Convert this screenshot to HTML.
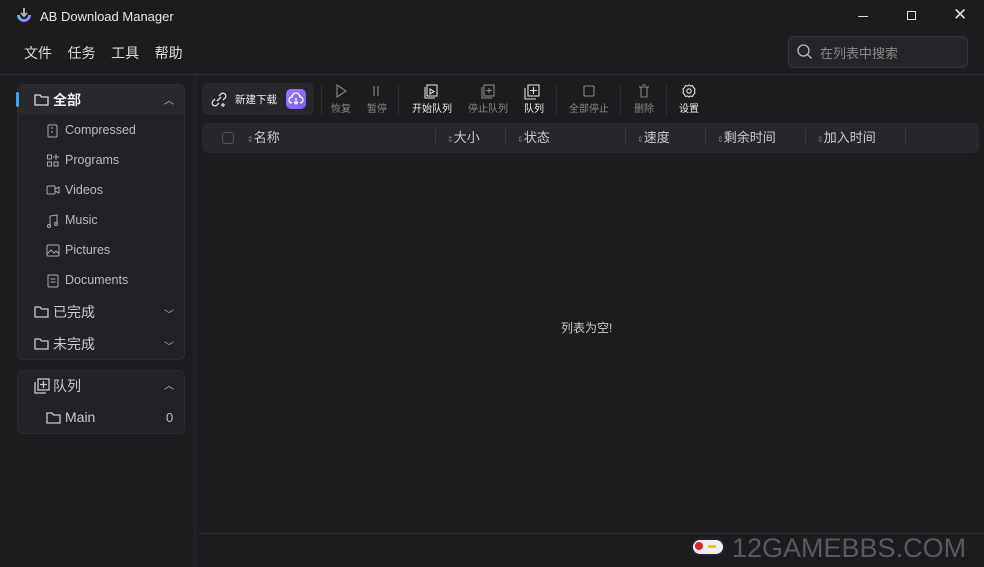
<!DOCTYPE html>
<html><head><meta charset="utf-8"><style>
*{margin:0;padding:0;box-sizing:border-box}
body{width:984px;height:567px;background:#1c1c1f;font-family:"Liberation Sans","Noto Sans CJK SC",sans-serif;color:#ddd;position:relative;overflow:hidden;font-size:13px}
.a{position:absolute}
.t{white-space:nowrap}
svg{position:absolute;fill:none;stroke:currentColor;stroke-width:1.3}
.panel{background:#222226;border:1px solid #2a2a2f;border-radius:6px}
.th{color:#ccc;font-size:13px;top:127px}
.sep{width:1px;height:16px;background:#3a3a40;top:129px}
.tb{font-size:10px;text-align:center;width:40px;top:100px}
</style></head><body>
<svg class="a" style="left:15px;top:7px;stroke:none" width="18" height="18" viewBox="0 0 18 18"><defs><linearGradient id="g" x1="0" y1="0" x2="1" y2="1"><stop offset="0" stop-color="#40c4ff"/><stop offset="1" stop-color="#c060ff"/></linearGradient></defs><path d="M2 8a7 7 0 0 0 14 0h-3a4 4 0 0 1-8 0z" fill="url(#g)"/><path d="M9 1v8M6 6l3 3 3-3" stroke="#bbb" stroke-width="1.8" fill="none"/></svg>
<div class="a t" style="left:40px;top:9px;font-size:13px;color:#e6e6e6">AB Download Manager</div>
<div class="a" style="left:858px;top:16px;width:10px;height:1px;background:#ddd"></div>
<div class="a" style="left:907px;top:11px;width:9px;height:9px;border:1px solid #ddd"></div>
<div class="a t" style="left:953px;top:5px;font-size:17px;color:#ddd">✕</div>
<div class="a t" style="left:24px;top:43px;font-size:14px;color:#ddd">文件&nbsp;&nbsp;&nbsp;&nbsp;任务&nbsp;&nbsp;&nbsp;&nbsp;工具&nbsp;&nbsp;&nbsp;&nbsp;帮助</div>
<div class="a" style="left:788px;top:36px;width:180px;height:32px;background:#252529;border:1px solid #343439;border-radius:6px"></div>
<svg class="a" style="left:796px;top:43px;color:#bbb" width="18" height="18"><circle cx="7.5" cy="7.5" r="5.5"/><path d="M11.5 11.5l4 4"/></svg>
<div class="a t" style="left:820px;top:43px;color:#888;font-size:13px">在列表中搜索</div>
<div class="a" style="left:0;top:74px;width:984px;height:1px;background:#2c2c31"></div>
<div class="a" style="left:193px;top:75px;width:4px;height:492px;background:#202024"></div>
<div class="a panel" style="left:17px;top:84px;width:168px;height:276px"></div>
<div class="a" style="left:18px;top:85px;width:166px;height:30px;background:#28282d;border-radius:6px 6px 0 0"></div>
<div class="a" style="left:16px;top:92px;width:3px;height:15px;background:#4aa3df;border-radius:2px"></div>
<svg class="a" style="left:34px;top:93px;color:#ddd" width="15" height="13"><path d="M1 2h5l1.5 2H14v8H1z"/></svg>
<div class="a t" style="left:53px;top:90px;font-size:14px;font-weight:bold;color:#eee">全部</div>
<div class="a t" style="left:164px;top:92px;font-size:10px;color:#bbb">︿</div>
<div class="a t" style="left:65px;top:115px;color:#bbb;font-size:12.5px;line-height:30px">Compressed<br>Programs<br>Videos<br>Music<br>Pictures<br>Documents</div>
<svg class="a" style="left:46px;top:123px;color:#aaa;stroke-width:1" width="14" height="180">
<rect x="2" y="2" width="9" height="12" rx="1"/><path d="M6 4v2M6 8v2"/>
<rect x="1.5" y="32" width="4" height="4"/><rect x="1.5" y="39" width="4" height="4"/><rect x="8" y="39" width="4" height="4"/><path d="M10 31v6M7 34h6"/>
<rect x="1" y="63" width="8" height="8" rx="1"/><path d="M9 66l4-2v6l-4-2"/>
<path d="M4 103V93l7-1v9"/><circle cx="3" cy="103" r="1.5"/><circle cx="10" cy="101" r="1.5"/>
<rect x="1" y="122" width="12" height="11" rx="1"/><path d="M1 131l4-4 3 3 2-2 3 3"/>
<rect x="2" y="152" width="10" height="12" rx="1"/><path d="M4.5 156h5M4.5 159h5"/>
</svg>
<svg class="a" style="left:34px;top:305px;color:#ccc" width="15" height="45"><path d="M1 2h5l1.5 2H14v8H1z"/><path d="M1 34h5l1.5 2H14v8H1z"/></svg>
<div class="a t" style="left:53px;top:296px;font-size:14px;color:#ccc;line-height:32px">已完成<br>未完成</div>
<div class="a t" style="left:164px;top:300px;font-size:10px;color:#aaa;line-height:32px">﹀<br>﹀</div>
<div class="a panel" style="left:17px;top:370px;width:168px;height:64px"></div>
<svg class="a" style="left:34px;top:378px;color:#ccc" width="16" height="16"><rect x="4" y="1" width="11" height="11"/><path d="M9.5 3v7M6 6.5h7M1 4v11h11"/></svg>
<div class="a t" style="left:53px;top:376px;font-size:14px;color:#ccc">队列</div>
<div class="a t" style="left:164px;top:377px;font-size:10px;color:#bbb">︿</div>
<svg class="a" style="left:46px;top:411px;color:#ccc" width="15" height="13"><path d="M1 2h5l1.5 2H14v8H1z"/></svg>
<div class="a t" style="left:65px;top:409px;font-size:14px;color:#ccc">Main</div>
<div class="a t" style="left:166px;top:410px;font-size:13px;color:#bbb">0</div>
<div class="a" style="left:202px;top:83px;width:112px;height:32px;background:#26262b;border-radius:6px"></div>
<svg class="a" style="left:210px;top:91px;color:#ddd" width="18" height="17"><path d="M7 10l4-4M5 8l-2 2a2.5 2.5 0 0 0 4 4l2-2M9 5l2-2a2.5 2.5 0 0 1 4 4l-2 2M13 12v4M11 14h4"/></svg>
<div class="a t" style="left:235px;top:92px;font-size:10.5px;color:#eee">新建下载</div>
<div class="a" style="left:286px;top:89px;width:20px;height:20px;border-radius:5px;background:linear-gradient(135deg,#9a7cff,#7a5cf0)"></div>
<svg class="a" style="left:288px;top:92px;color:#fff" width="16" height="14"><path d="M4 11a3 3 0 0 1 0-6 4 4 0 0 1 8 0 3 3 0 0 1 0 6M8 6v6M6 10l2 2 2-2"/></svg>
<div class="a" style="left:321px;top:84px;width:1px;height:32px;background:#2c2c31"></div>
<div class="a" style="left:398px;top:84px;width:1px;height:32px;background:#2c2c31"></div>
<div class="a" style="left:556px;top:84px;width:1px;height:32px;background:#2c2c31"></div>
<div class="a" style="left:620px;top:84px;width:1px;height:32px;background:#2c2c31"></div>
<div class="a" style="left:666px;top:84px;width:1px;height:32px;background:#2c2c31"></div>
<svg class="a" style="left:320px;top:83px;color:#888;stroke-width:1.1" width="400" height="18">
<path d="M17 2l9 6-9 6z"/><path d="M54 3v10M58 3v10"/>
<g stroke="#ddd"><rect x="107" y="2" width="10" height="11"/><path d="M105 4v11h10M110 6l4 2.5-4 2.5z"/></g>
<rect x="164" y="2" width="10" height="11"/><path d="M162 4v11h10M166 7.5h6M169 5v5"/>
<g stroke="#ddd"><rect x="208" y="2" width="11" height="11"/><path d="M213.5 4v7M210 7.5h7M205 5v11h11"/></g>
<rect x="264" y="3" width="10" height="10" rx="1"/>
<path d="M319 4h10M321 4v10h6V4M322 2h4"/>
<g stroke="#ddd"><circle cx="369" cy="8" r="2.2"/><path d="M369 2l1.5 1 2 -0.5 1 2 1.5 1.5-0.5 2 0.5 2-1.5 1.5-1 2-2-0.5-1.5 1-1.5-1-2 .5-1-2-1.5-1.5.5-2-.5-2 1.5-1.5 1-2 2 .5z"/></g>
</svg>
<div class="a tb" style="left:321px;color:#888">恢复</div>
<div class="a tb" style="left:357px;color:#888">暂停</div>
<div class="a tb" style="left:406px;width:52px;color:#eee">开始队列</div>
<div class="a tb" style="left:462px;width:52px;color:#888">停止队列</div>
<div class="a tb" style="left:514px;color:#eee">队列</div>
<div class="a tb" style="left:563px;width:52px;color:#888">全部停止</div>
<div class="a tb" style="left:624px;color:#888">删除</div>
<div class="a tb" style="left:669px;color:#eee">设置</div>
<div class="a" style="left:202px;top:123px;width:777px;height:30px;background:#26262b;border-radius:6px"></div>
<div class="a" style="left:222px;top:132px;width:12px;height:12px;border:1px solid #555;border-radius:3px"></div>
<div class="a t th" style="left:247px"><span style="font-size:8px;color:#777">⇕</span>名称</div>
<div class="a sep" style="left:435px"></div>
<div class="a t th" style="left:447px"><span style="font-size:8px;color:#777">⇕</span>大小</div>
<div class="a sep" style="left:505px"></div>
<div class="a t th" style="left:517px"><span style="font-size:8px;color:#777">⇕</span>状态</div>
<div class="a sep" style="left:625px"></div>
<div class="a t th" style="left:637px"><span style="font-size:8px;color:#777">⇕</span>速度</div>
<div class="a sep" style="left:705px"></div>
<div class="a t th" style="left:717px"><span style="font-size:8px;color:#777">⇕</span>剩余时间</div>
<div class="a sep" style="left:805px"></div>
<div class="a t th" style="left:817px"><span style="font-size:8px;color:#777">⇕</span>加入时间</div>
<div class="a sep" style="left:905px"></div>
<div class="a t" style="left:561px;top:319px;font-size:12px;color:#ccc">列表为空!</div>
<div class="a" style="left:198px;top:533px;width:786px;height:1px;background:#2c2c31"></div>
<div class="a t" style="left:732px;top:533px;font-size:27px;color:#5a5a5e">12GAMEBBS.COM</div>
<div class="a" style="left:691px;top:538px;width:34px;height:18px;border-radius:9px;background:#eee;border:2px solid #223"></div>
<div class="a" style="left:695px;top:542px;width:8px;height:8px;border-radius:50%;background:#d22"></div>
<div class="a" style="left:708px;top:545px;width:8px;height:3px;background:#ec0"></div>
</body></html>
